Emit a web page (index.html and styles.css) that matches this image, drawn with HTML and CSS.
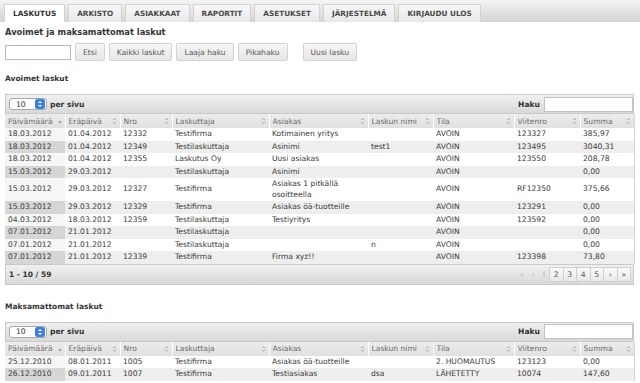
FILE: index.html
```html
<!DOCTYPE html>
<html lang="fi">
<head>
<meta charset="utf-8">
<title>Laskutus</title>
<link rel="stylesheet" href="styles.css">
</head>
<body>
<nav class="tabs">
  <a class="tab active">LASKUTUS</a>
  <a class="tab">ARKISTO</a>
  <a class="tab">ASIAKKAAT</a>
  <a class="tab">RAPORTIT</a>
  <a class="tab">ASETUKSET</a>
  <a class="tab">JÄRJESTELMÄ</a>
  <a class="tab">KIRJAUDU ULOS</a>
</nav>
<main class="page">
  <h1>Avoimet ja maksamattomat laskut</h1>
  <div class="search">
    <input class="q" type="text">
    <button>Etsi</button>
    <button>Kaikki laskut</button>
    <button>Laaja haku</button>
    <button>Pikahaku</button>
    <button class="new">Uusi lasku</button>
  </div>

  <h2 class="sec1">Avoimet laskut</h2>
  <section class="grid">
    <div class="bar top">
      <div class="len"><span class="sel">10<svg class="spin" viewBox="0 0 10 10" width="10" height="10"><rect x="0" y="0" width="10" height="10" rx="2.5" fill="#3d7fdc"/><path d="M3 4 5 2 7 4Z M3 6 5 8 7 6Z" fill="#fff"/></svg></span><b>per sivu</b></div>
      <div class="filter"><b>Haku</b><span class="finput"></span></div>
    </div>
    <table>
      <colgroup><col class="c1"><col class="c2"><col class="c3"><col class="c4"><col class="c5"><col class="c6"><col class="c7"><col class="c8"><col class="c9"></colgroup>
      <thead><tr>
        <th><div class="h">Päivämäärä<span class="dir">▾</span></div></th>
        <th><div class="h">Eräpäivä<svg class="si" viewBox="0 0 5 8" width="5" height="8"><path d="M1 3.2 2.5 1.5 4 3.2M1 4.8 2.5 6.5 4 4.8" fill="none" stroke="#9a9a9a" stroke-width=".8"/></svg></div></th>
        <th><div class="h">Nro<svg class="si" viewBox="0 0 5 8" width="5" height="8"><path d="M1 3.2 2.5 1.5 4 3.2M1 4.8 2.5 6.5 4 4.8" fill="none" stroke="#9a9a9a" stroke-width=".8"/></svg></div></th>
        <th><div class="h">Laskuttaja<svg class="si" viewBox="0 0 5 8" width="5" height="8"><path d="M1 3.2 2.5 1.5 4 3.2M1 4.8 2.5 6.5 4 4.8" fill="none" stroke="#9a9a9a" stroke-width=".8"/></svg></div></th>
        <th><div class="h">Asiakas<svg class="si" viewBox="0 0 5 8" width="5" height="8"><path d="M1 3.2 2.5 1.5 4 3.2M1 4.8 2.5 6.5 4 4.8" fill="none" stroke="#9a9a9a" stroke-width=".8"/></svg></div></th>
        <th><div class="h">Laskun nimi<svg class="si" viewBox="0 0 5 8" width="5" height="8"><path d="M1 3.2 2.5 1.5 4 3.2M1 4.8 2.5 6.5 4 4.8" fill="none" stroke="#9a9a9a" stroke-width=".8"/></svg></div></th>
        <th><div class="h">Tila<svg class="si" viewBox="0 0 5 8" width="5" height="8"><path d="M1 3.2 2.5 1.5 4 3.2M1 4.8 2.5 6.5 4 4.8" fill="none" stroke="#9a9a9a" stroke-width=".8"/></svg></div></th>
        <th><div class="h">Viitenro<svg class="si" viewBox="0 0 5 8" width="5" height="8"><path d="M1 3.2 2.5 1.5 4 3.2M1 4.8 2.5 6.5 4 4.8" fill="none" stroke="#9a9a9a" stroke-width=".8"/></svg></div></th>
        <th><div class="h">Summa<svg class="si" viewBox="0 0 5 8" width="5" height="8"><path d="M1 3.2 2.5 1.5 4 3.2M1 4.8 2.5 6.5 4 4.8" fill="none" stroke="#9a9a9a" stroke-width=".8"/></svg></div></th>
      </tr></thead>
      <tbody>
        <tr class="odd"><td class="s">18.03.2012</td><td>01.04.2012</td><td>12332</td><td>Testifirma</td><td>Kotimainen yritys</td><td></td><td>AVOIN</td><td>123327</td><td>385,97</td></tr>
        <tr class="even"><td class="s">18.03.2012</td><td>01.04.2012</td><td>12349</td><td>Testilaskuttaja</td><td>Asinimi</td><td>test1</td><td>AVOIN</td><td>123495</td><td>3040,31</td></tr>
        <tr class="odd"><td class="s">18.03.2012</td><td>01.04.2012</td><td>12355</td><td>Laskutus Oy</td><td>Uusi asiakas</td><td></td><td>AVOIN</td><td>123550</td><td>208,78</td></tr>
        <tr class="even"><td class="s">15.03.2012</td><td>29.03.2012</td><td></td><td>Testilaskuttaja</td><td>Asinimi</td><td></td><td>AVOIN</td><td></td><td>0,00</td></tr>
        <tr class="odd"><td class="s">15.03.2012</td><td>29.03.2012</td><td>12327</td><td>Testifirma</td><td>Asiakas 1 pitkällä osoitteella</td><td></td><td>AVOIN</td><td>RF12350</td><td>375,66</td></tr>
        <tr class="even"><td class="s">15.03.2012</td><td>29.03.2012</td><td>12329</td><td>Testifirma</td><td>Asiakas öä-tuotteille</td><td></td><td>AVOIN</td><td>123291</td><td>0,00</td></tr>
        <tr class="odd"><td class="s">04.03.2012</td><td>18.03.2012</td><td>12359</td><td>Testilaskuttaja</td><td>Testiyritys</td><td></td><td>AVOIN</td><td>123592</td><td>0,00</td></tr>
        <tr class="even"><td class="s">07.01.2012</td><td>21.01.2012</td><td></td><td>Testilaskuttaja</td><td></td><td></td><td>AVOIN</td><td></td><td>0,00</td></tr>
        <tr class="odd"><td class="s">07.01.2012</td><td>21.01.2012</td><td></td><td>Testilaskuttaja</td><td></td><td>n</td><td>AVOIN</td><td></td><td>0,00</td></tr>
        <tr class="even"><td class="s">07.01.2012</td><td>21.01.2012</td><td>12339</td><td>Testifirma</td><td>Firma xyz!!</td><td></td><td>AVOIN</td><td>123398</td><td>73,80</td></tr>
      </tbody>
    </table>
    <div class="bar bottom">
      <b class="info">1 - 10 / 59</b>
      <div class="pager">
        <span class="pg off">«</span><span class="pg off">‹</span><span class="pg off">1</span><span class="pg">2</span><span class="pg">3</span><span class="pg">4</span><span class="pg">5</span><span class="pg">›</span><span class="pg">»</span>
      </div>
    </div>
  </section>

  <h2 class="sec2">Maksamattomat laskut</h2>
  <section class="grid">
    <div class="bar top">
      <div class="len"><span class="sel">10<svg class="spin" viewBox="0 0 10 10" width="10" height="10"><rect x="0" y="0" width="10" height="10" rx="2.5" fill="#3d7fdc"/><path d="M3 4 5 2 7 4Z M3 6 5 8 7 6Z" fill="#fff"/></svg></span><b>per sivu</b></div>
      <div class="filter"><b>Haku</b><span class="finput"></span></div>
    </div>
    <table>
      <colgroup><col class="c1"><col class="c2"><col class="c3"><col class="c4"><col class="c5"><col class="c6"><col class="c7"><col class="c8"><col class="c9"></colgroup>
      <thead><tr>
        <th><div class="h">Päivämäärä<span class="dir">▴</span></div></th>
        <th><div class="h">Eräpäivä<svg class="si" viewBox="0 0 5 8" width="5" height="8"><path d="M1 3.2 2.5 1.5 4 3.2M1 4.8 2.5 6.5 4 4.8" fill="none" stroke="#9a9a9a" stroke-width=".8"/></svg></div></th>
        <th><div class="h">Nro<svg class="si" viewBox="0 0 5 8" width="5" height="8"><path d="M1 3.2 2.5 1.5 4 3.2M1 4.8 2.5 6.5 4 4.8" fill="none" stroke="#9a9a9a" stroke-width=".8"/></svg></div></th>
        <th><div class="h">Laskuttaja<svg class="si" viewBox="0 0 5 8" width="5" height="8"><path d="M1 3.2 2.5 1.5 4 3.2M1 4.8 2.5 6.5 4 4.8" fill="none" stroke="#9a9a9a" stroke-width=".8"/></svg></div></th>
        <th><div class="h">Asiakas<svg class="si" viewBox="0 0 5 8" width="5" height="8"><path d="M1 3.2 2.5 1.5 4 3.2M1 4.8 2.5 6.5 4 4.8" fill="none" stroke="#9a9a9a" stroke-width=".8"/></svg></div></th>
        <th><div class="h">Laskun nimi<svg class="si" viewBox="0 0 5 8" width="5" height="8"><path d="M1 3.2 2.5 1.5 4 3.2M1 4.8 2.5 6.5 4 4.8" fill="none" stroke="#9a9a9a" stroke-width=".8"/></svg></div></th>
        <th><div class="h">Tila<svg class="si" viewBox="0 0 5 8" width="5" height="8"><path d="M1 3.2 2.5 1.5 4 3.2M1 4.8 2.5 6.5 4 4.8" fill="none" stroke="#9a9a9a" stroke-width=".8"/></svg></div></th>
        <th><div class="h">Viitenro<svg class="si" viewBox="0 0 5 8" width="5" height="8"><path d="M1 3.2 2.5 1.5 4 3.2M1 4.8 2.5 6.5 4 4.8" fill="none" stroke="#9a9a9a" stroke-width=".8"/></svg></div></th>
        <th><div class="h">Summa<svg class="si" viewBox="0 0 5 8" width="5" height="8"><path d="M1 3.2 2.5 1.5 4 3.2M1 4.8 2.5 6.5 4 4.8" fill="none" stroke="#9a9a9a" stroke-width=".8"/></svg></div></th>
      </tr></thead>
      <tbody>
        <tr class="odd"><td class="s">25.12.2010</td><td>08.01.2011</td><td>1005</td><td>Testifirma</td><td>Asiakas öä-tuotteille</td><td></td><td>2. HUOMAUTUS</td><td>123123</td><td>0,00</td></tr>
        <tr class="even"><td class="s">26.12.2010</td><td>09.01.2011</td><td>1007</td><td>Testifirma</td><td>Testiasiakas</td><td>dsa</td><td>LÄHETETTY</td><td>10074</td><td>147,60</td></tr>
      </tbody>
    </table>
  </section>
</main>
</body>
</html>
```
FILE: styles.css
```css
* { box-sizing: border-box; margin: 0; padding: 0; }

html, body { width: 640px; height: 383px; overflow: hidden; }

body {
  font-family: "DejaVu Sans", Verdana, sans-serif;
  font-size: 7.6px;
  color: #333;
  background: #fff;
}

b { font-weight: bold; }

/* Tabs */
.tabs {
  display: flex;
  gap: 3px;
  height: 22px;
  padding: 4px 0 0 4px;
  background: linear-gradient(#f4f4f4, #d4d4d4);
}

.tab {
  display: block;
  height: 18px;
  line-height: 18px;
  padding: 0 8px;
  font-size: 7.3px;
  font-weight: bold;
  color: #4a4a4a;
  background: linear-gradient(#f8f8f8, #e8e8e8);
  border: 1px solid #d3d3d3;
  border-bottom: none;
}

.tab.active { background: #fff; color: #333; }

/* Page */
.page { padding: 0 5px; }

h1 {
  font-size: 8.3px;
  font-weight: bold;
  line-height: 12px;
  margin-top: 4px;
  color: #333;
}

.search {
  display: flex;
  align-items: center;
  gap: 4px;
  height: 18px;
  margin-top: 5px;
}

.q {
  width: 66px;
  height: 15px;
  border: 1px solid #b8b8b8;
  background: #fff;
}

button {
  font: inherit;
  height: 18px;
  padding: 0 7px;
  color: #555;
  border: 1px solid #d2d2d2;
  border-radius: 2px;
  background: linear-gradient(#f6f6f6, #e6e6e6);
}

.new { margin-left: 11px; }

h2 {
  font-size: 7.5px;
  font-weight: bold;
  line-height: 10px;
}

.sec1 { margin-top: 13px; }
.sec2 { margin-top: 17px; }

/* Grid */
.grid { margin-top: 10px; width: 629px; }

.bar {
  display: flex;
  align-items: center;
  justify-content: space-between;
  height: 20px;
  padding: 0 0 0 3px;
  background: linear-gradient(#f0f0f0, #d9d9d9);
  border: 1px solid #c9c9c9;
}

.len { display: flex; align-items: center; gap: 3px; }

.sel {
  display: flex;
  align-items: center;
  justify-content: space-between;
  width: 38px;
  height: 12px;
  padding: 0 1px 0 6px;
  background: #fff;
  border: 1px solid #a9a9a9;
  border-radius: 3px;
}

.filter { display: flex; align-items: center; gap: 4px; }

.finput {
  display: block;
  width: 89px;
  height: 15px;
  background: #fff;
  border: 1px solid #c2c2c2;
}

table {
  width: 629px;
  border-collapse: collapse;
  table-layout: fixed;
  border-right: 1px solid #d8d8d8;
}

.c1 { width: 60px; }
.c2 { width: 55px; }
.c3 { width: 52px; }
.c4 { width: 97px; }
.c5 { width: 99px; }
.c6 { width: 65px; }
.c7 { width: 81px; }
.c8 { width: 66px; }
.c9 { width: 54px; }

th {
  height: 14px;
  padding: 0 3px 0 3px;
  font-weight: normal;
  color: #6a6a6a;
  text-align: left;
  background: linear-gradient(#ececec, #e0e0e0);
  border-left: 1px solid #fff;
  white-space: nowrap;
}

th:first-child { border-left: none; }

.h {
  display: flex;
  align-items: center;
  justify-content: space-between;
  overflow: hidden;
}

.dir { color: #999; font-size: 6px; }

td {
  padding: 1px 2px 1px 3px;
  line-height: 10.5px;
  color: #3a3a3a;
  vertical-align: middle;
}

tr.even td { background: #eeeeee; }
tr.even td.s { background: #d6d6d6; }
tr.odd td.s { background: #f6f6f6; }

.bottom { height: 21px; padding-right: 2px; }

.info { font-size: 7.5px; }

.pager { display: flex; }

.pg {
  display: block;
  width: 14.5px;
  height: 15px;
  line-height: 13px;
  text-align: center;
  color: #555;
  background: linear-gradient(#fafafa, #e9e9e9);
  border: 1px solid #cfcfcf;
  margin-left: -1px;
}

.pg.off {
  width: 12px;
  color: #bdbdbd;
  background: transparent;
  border-color: transparent;
}
```
